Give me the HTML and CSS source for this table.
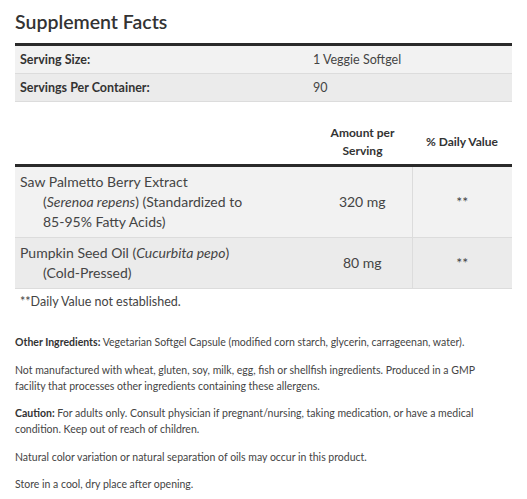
FILE: index.html
```html
<!DOCTYPE html>
<html>
<head>
<meta charset="utf-8">
<link rel="stylesheet" href="styles.css">
</head>
<body>
<div class="page">
  <h2 class="title">Supplement Facts</h2>
  <table class="serving">
    <tr class="odd"><th>Serving Size:</th><td>1 Veggie Softgel</td></tr>
    <tr class="even"><th>Servings Per Container:</th><td>90</td></tr>
  </table>
  <table class="facts">
    <thead>
      <tr><th class="c-name"></th><th class="c-amt">Amount per<br>Serving</th><th class="c-dv">% Daily Value</th></tr>
    </thead>
    <tbody>
      <tr class="odd">
        <td class="c-name"><div class="ing">Saw Palmetto Berry Extract</div><div class="sub">(<i>Serenoa repens</i>) (Standardized to <span class="nw">85-95%</span> Fatty Acids)</div></td>
        <td class="c-amt">320 mg</td>
        <td class="c-dv">**</td>
      </tr>
      <tr class="even">
        <td class="c-name"><div class="ing">Pumpkin Seed Oil (<i>Cucurbita pepo</i>)</div><div class="sub">(Cold-Pressed)</div></td>
        <td class="c-amt">80 mg</td>
        <td class="c-dv">**</td>
      </tr>
      <tr class="foot"><td colspan="3">**Daily Value not established.</td></tr>
    </tbody>
  </table>
  <div class="notes">
    <p><b>Other Ingredients:</b> Vegetarian Softgel Capsule (modified corn starch, glycerin, carrageenan, water).</p>
    <p>Not manufactured with wheat, gluten, soy, milk, egg, fish or shellfish ingredients. Produced in a GMP facility that processes other ingredients containing these allergens.</p>
    <p><b>Caution:</b> For adults only. Consult physician if pregnant/nursing, taking medication, or have a medical condition. Keep out of reach of children.</p>
    <p>Natural color variation or natural separation of oils may occur in this product.</p>
    <p>Store in a cool, dry place after opening.</p>
  </div>
</div>
</body>
</html>
```
FILE: styles.css
```css
html, body { margin: 0; padding: 0; background: #fff; }
body { font-family: Lato, "Open Sans", sans-serif; color: #444; }
.page { padding: 0 15px; }
.title { margin: 0; padding-top: 9px; height: 34px; font-size: 19.5px; font-weight: 600; color: #333; line-height: 26px; }
table { width: 497px; border-collapse: collapse; table-layout: fixed; }
th, td { box-sizing: border-box; }
.serving { border-top: 3px solid #2a2a2a; }
.serving th, .serving td { font-size: 12.5px; line-height: 17px; padding: 5px 5px; text-align: left; border-bottom: 1px solid #dcdcdc; }
.serving th { font-weight: 700; color: #333; width: 298px; }
.serving td { color: #444; padding-left: 0; }
.odd { background: #f2f2f2; }
.even { background: #ebebeb; }
.facts { margin-top: 18px; }
.facts thead th { font-size: 12px; font-weight: 700; color: #333; line-height: 18px; padding: 4px 0 4px; border-bottom: 3px solid #2a2a2a; text-align: center; }
.c-name { width: 298px; }
.c-amt { width: 99px; text-align: center; }
.c-dv { width: 100px; text-align: center; }
.facts tbody td { font-size: 14px; line-height: 20px; padding: 5px 5px; border-bottom: 1px solid #dcdcdc; color: #444; }
.facts tbody td.c-name { padding-right: 33px; }
.facts tbody td.c-dv { border-left: 1px solid #dcdcdc; }
.sub { padding-left: 23px; }
.nw { white-space: nowrap; }
.facts .foot td { font-size: 12.5px; line-height: 16px; padding: 5px 5px; border-bottom: none; background: #fff; }
.notes { padding-top: 19px; padding-right: 10px; }
.notes p { margin: 0 0 11.5px; font-size: 10.5px; line-height: 16px; color: #444; }
.notes b { font-weight: 700; color: #333; }
```
